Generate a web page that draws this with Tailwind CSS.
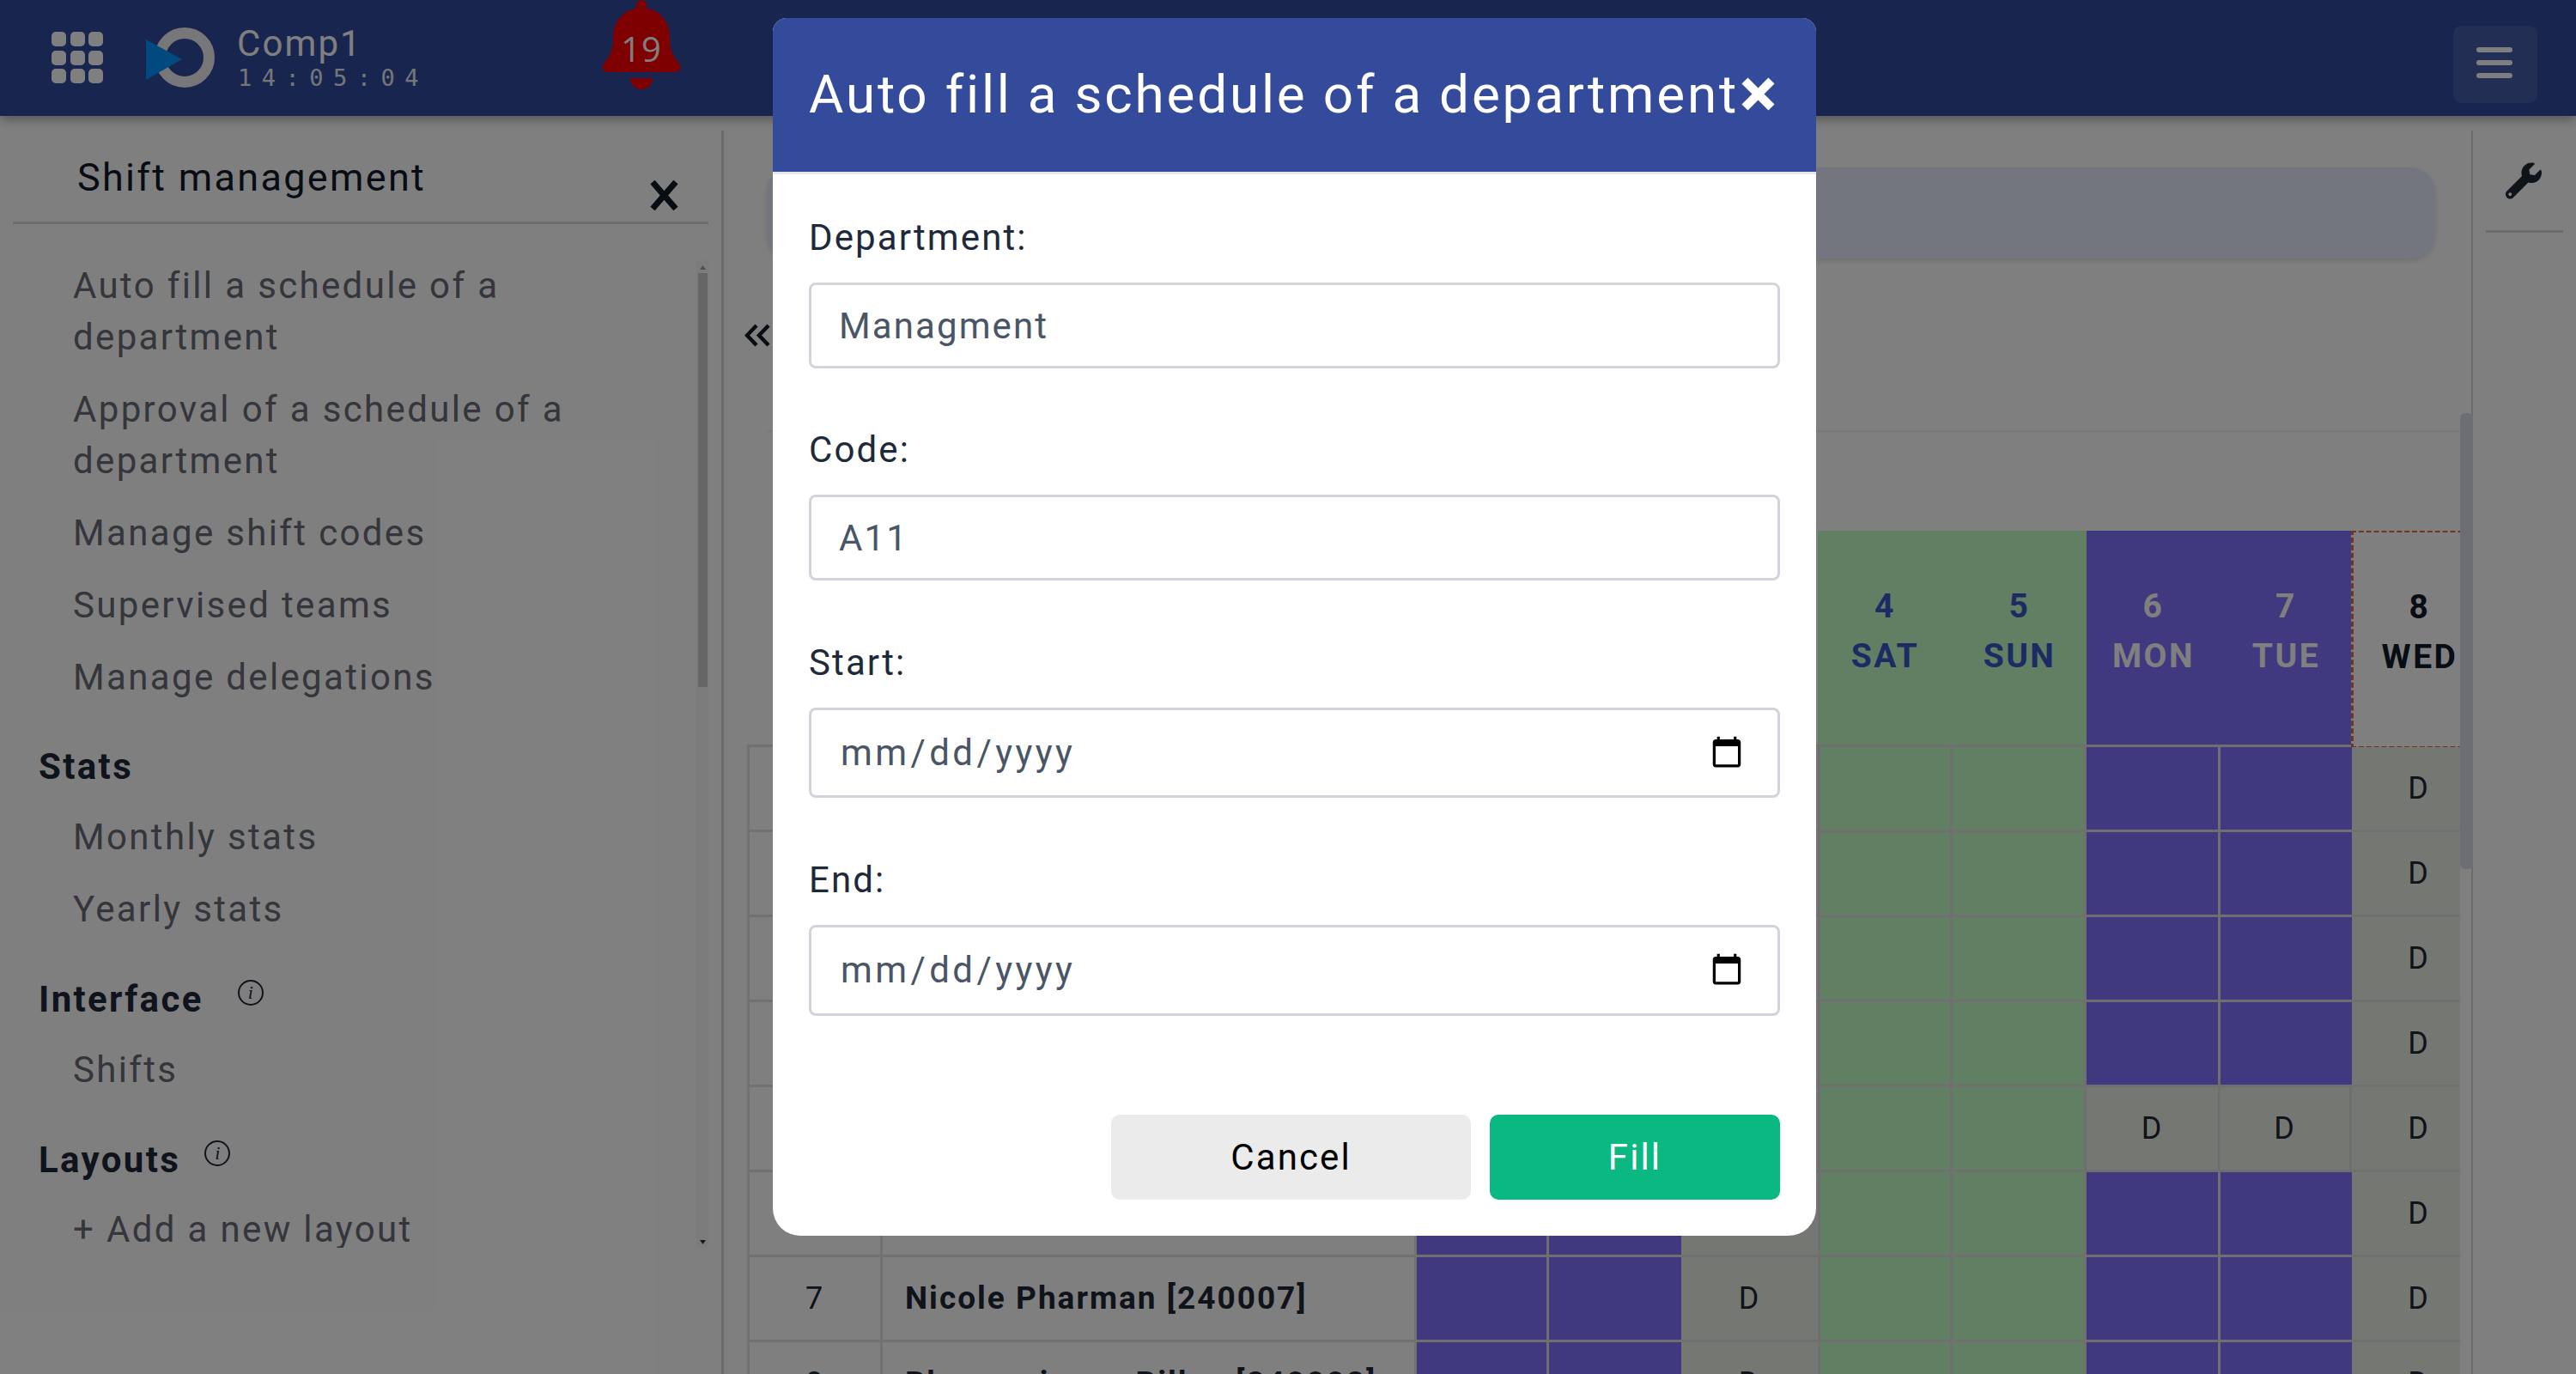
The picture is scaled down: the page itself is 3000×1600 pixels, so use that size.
<!DOCTYPE html>
<html lang="en">
<head>
<meta charset="utf-8">
<title>Auto fill a schedule of a department</title>
<script src="https://cdn.jsdelivr.net/npm/@tailwindcss/browser@4"></script>
</head>
<body class="font-['Roboto',sans-serif] tracking-[2.1px] text-[42px] leading-[60px] bg-white">
<div class="relative w-[3000px] h-[1600px] overflow-hidden flex flex-col">
  <header class="relative z-10 h-[135px] shrink-0 bg-[#304a9e] shadow-[0_4px_12px_rgba(0,0,0,0.35)] flex items-start text-white">
    <div class="ml-[60px] mt-[37px] w-[60px] h-[60px] grid grid-cols-3 gap-[4.5px]">
      <span class="bg-white rounded-[5px]"></span><span class="bg-white rounded-[5px]"></span><span class="bg-white rounded-[5px]"></span>
      <span class="bg-white rounded-[5px]"></span><span class="bg-white rounded-[5px]"></span><span class="bg-white rounded-[5px]"></span>
      <span class="bg-white rounded-[5px]"></span><span class="bg-white rounded-[5px]"></span><span class="bg-white rounded-[5px]"></span>
    </div>
    <svg class="ml-[50px] mt-[30px]" width="82" height="74" viewBox="0 0 82 74"><circle cx="45" cy="37" r="28.5" fill="none" stroke="#eeeef2" stroke-width="13"/><path d="M0 16 L42 39 L0 63 Z" fill="#0095ff"/></svg>
    <div class="ml-[24px] mt-[23px] flex flex-col">
      <span class="leading-[56px]">Comp1</span>
      <span class="font-['DejaVu_Sans_Mono',monospace] text-[27px] leading-[30px] tracking-[11.5px] -mt-[3px] ml-[1px] font-extralight text-white/90">14:05:04</span>
    </div>
    <div class="relative ml-[202px] w-[92px] h-[104px]">
      <svg width="92" height="104" viewBox="0 0 92 104"><rect x="40" y="0" width="12" height="14" rx="6" fill="#ff0000"/><path d="M46 9 C27 9 13 24 13 43 V48 C13 60 7 68 2 74 C-1 78 1 84 7 84 H85 C91 84 93 78 90 74 C85 68 79 60 79 48 V43 C79 24 65 9 46 9 Z" fill="#ff0000"/><path d="M33 91 H59 C59 99 53 104 46 104 C39 104 33 99 33 91 Z" fill="#ff0000"/></svg>
      <span class="absolute inset-x-0 top-[27px] text-center font-['Open_Sans',sans-serif] text-[40px] leading-[60px] tracking-[1px]">19</span>
    </div>
    <div class="ml-auto mr-[45px] mt-[30px] w-[98px] h-[90px] rounded-[10px] bg-white/10 flex flex-col gap-[9px] pt-[25px] pl-[27px]">
      <span class="w-[42px] h-[6px] rounded-full bg-white"></span>
      <span class="w-[42px] h-[6px] rounded-full bg-white"></span>
      <span class="w-[42px] h-[6px] rounded-full bg-white"></span>
    </div>
  </header>

  <div class="flex flex-1 min-h-0">
    <aside class="w-[843px] shrink-0 pt-[17px]">
      <div class="h-full border-r-[3px] border-[#d4d6d8]">
        <div class="relative ml-[15px] mr-[15px] h-[109px] border-b-[3px] border-[#d9d9d9]">
          <h2 class="pl-[75px] pt-[25px] text-[45px] leading-[60px] tracking-[2.3px] text-gray-900">Shift management</h2>
          <svg class="absolute left-[741px] top-[58px]" width="35" height="35" viewBox="0 0 35 35"><path d="M4 2 L31 33 M31 2 L4 33" stroke="#111827" stroke-width="7"/></svg>
        </div>
        <div class="relative ml-[15px] mr-[15px] mt-[42px] h-[1150px] overflow-hidden">
          <div class="absolute right-0 top-0 bottom-0 w-[14px] bg-[#f8f8f8]">
            <div class="absolute left-[2px] right-[1px] top-[15px] h-[482px] bg-[#cdcdcd]"></div>
            <svg class="absolute left-[4px] top-[6px]" width="7" height="5" viewBox="0 0 7 5"><path d="M3.5 0 L7 5 H0 Z" fill="#a0a0a0"/></svg>
            <svg class="absolute left-[4px] bottom-[4px]" width="7" height="5" viewBox="0 0 7 5"><path d="M0 0 H7 L3.5 5 Z" fill="#303030"/></svg>
          </div>
          <nav class="pl-[30px] text-[#686c78] tracking-[2.35px] flex flex-col">
            <ul class="flex flex-col gap-[24px] pl-[40px] w-[720px]">
              <li>Auto fill a schedule of a department</li>
              <li>Approval of a schedule of a department</li>
              <li>Manage shift codes</li>
              <li>Supervised teams</li>
              <li>Manage delegations</li>
            </ul>
            <h3 class="mt-[44px] font-bold text-gray-800">Stats</h3>
            <ul class="mt-[22px] flex flex-col gap-[24px] pl-[40px]">
              <li>Monthly stats</li>
              <li>Yearly stats</li>
            </ul>
            <h3 class="mt-[45px] font-bold text-gray-800 flex items-start">Interface
              <span class="ml-[40px] w-[30px] h-[30px] mt-[7px] rounded-full border-2 border-gray-800 flex items-center justify-center font-['Liberation_Serif',serif] italic font-normal text-[22px] leading-none tracking-normal">i</span>
            </h3>
            <ul class="mt-[22px] pl-[40px]"><li>Shifts</li></ul>
            <h3 class="mt-[45px] font-bold text-gray-800 flex items-start">Layouts
              <span class="ml-[28px] w-[30px] h-[30px] mt-[7px] rounded-full border-2 border-gray-800 flex items-center justify-center font-['Liberation_Serif',serif] italic font-normal text-[22px] leading-none tracking-normal">i</span>
            </h3>
            <ul class="mt-[21px] pl-[40px]"><li>+ Add a new layout</li></ul>
          </nav>
        </div>
      </div>
    </aside>

    <main class="relative flex-1 min-w-0">
      <svg class="absolute left-[24px] top-[242px]" width="30" height="27" viewBox="0 0 30 27"><path d="M14 2 L3 13.5 L14 25 M28 2 L17 13.5 L28 25" fill="none" stroke="#111827" stroke-width="4.5"/></svg>
      <div class="ml-[50px] mr-[42px] mt-[60px] h-[106px] rounded-[28px] bg-[#e6edff] shadow-[0_3px_6px_rgba(0,0,0,0.12)]"></div>
      <div class="ml-[50px] mr-[13px] mt-[200px] h-[2px] bg-[#f3f3f3]"></div>
      <div class="relative ml-[27px] mt-[115px] w-[1995px] overflow-hidden grid grid-cols-[158px_622px_154px_154px_159px_157px_156px_156px_153px_156px] grid-rows-[252px_repeat(8,99px)] text-[#1f2937] text-[36px] tracking-[2px]">
        <div class="col-span-5 border-b-[3px] border-[#e2e2e2]"></div>
        <div class="bg-[#c2fec6] border-b-[3px] border-[#dedede] font-bold text-[39px] tracking-[2.5px] text-[#3a55c8] text-center pt-[59px] leading-[58px]">4<br>SAT</div>
        <div class="bg-[#c2fec6] border-b-[3px] border-[#dedede] font-bold text-[39px] tracking-[2.5px] text-[#3a55c8] text-center pt-[59px] leading-[58px]">5<br>SUN</div>
        <div class="bg-[#8072fe] border-b-[3px] border-[#dedede] font-bold text-[39px] tracking-[2.5px] text-white text-center pt-[59px] leading-[58px]">6<br>MON</div>
        <div class="bg-[#8072fe] border-b-[3px] border-[#dedede] font-bold text-[39px] tracking-[2.5px] text-white text-center pt-[59px] leading-[58px]">7<br>TUE</div>
        <div class="h-[255px] bg-white font-bold text-[39px] tracking-[2.5px] text-gray-900 text-center pt-[58px] leading-[58px] border-t-[3px] border-l-[3px] border-b-[3px] border-dashed border-[#e06a40] -mt-[1px] -ml-[1px]">8<br>WED</div>

        <div class="border-[#e2e2e2] border-b-[3px] border-r-[3px] border-l-[3px] flex items-center justify-center">1</div><div class="border-[#e2e2e2] border-b-[3px] border-r-[3px]"></div><div class="bg-[#ebeee4] border-b-[3px] border-r-[3px] border-[#dcdedc]"></div><div class="bg-[#ebeee4] border-b-[3px] border-r-[3px] border-[#dcdedc]"></div><div class="bg-[#ebeee4] border-b-[3px] border-[#dcdedc]"></div>
        <div class="bg-[#c2fec6] border-b-[3px] border-r-[3px] border-l-[3px] border-[#dedede]"></div><div class="bg-[#c2fec6] border-b-[3px] border-r-[3px] border-[#dedede]"></div><div class="bg-[#8072fe] border-b-[3px] border-r-[3px] border-[#dedede]"></div><div class="bg-[#8072fe] border-b-[3px] border-[#dedede]"></div><div class="bg-[#ebeee4] border-b-[3px] border-[#e0e2dc] flex items-center justify-center">D</div>

        <div class="border-[#e2e2e2] border-b-[3px] border-r-[3px] border-l-[3px] flex items-center justify-center">2</div><div class="border-[#e2e2e2] border-b-[3px] border-r-[3px]"></div><div class="bg-[#ebeee4] border-b-[3px] border-r-[3px] border-[#dcdedc]"></div><div class="bg-[#ebeee4] border-b-[3px] border-r-[3px] border-[#dcdedc]"></div><div class="bg-[#ebeee4] border-b-[3px] border-[#dcdedc]"></div>
        <div class="bg-[#c2fec6] border-b-[3px] border-r-[3px] border-l-[3px] border-[#dedede]"></div><div class="bg-[#c2fec6] border-b-[3px] border-r-[3px] border-[#dedede]"></div><div class="bg-[#8072fe] border-b-[3px] border-r-[3px] border-[#dedede]"></div><div class="bg-[#8072fe] border-b-[3px] border-[#dedede]"></div><div class="bg-[#ebeee4] border-b-[3px] border-[#e0e2dc] flex items-center justify-center">D</div>

        <div class="border-[#e2e2e2] border-b-[3px] border-r-[3px] border-l-[3px] flex items-center justify-center">3</div><div class="border-[#e2e2e2] border-b-[3px] border-r-[3px]"></div><div class="bg-[#ebeee4] border-b-[3px] border-r-[3px] border-[#dcdedc]"></div><div class="bg-[#ebeee4] border-b-[3px] border-r-[3px] border-[#dcdedc]"></div><div class="bg-[#ebeee4] border-b-[3px] border-[#dcdedc]"></div>
        <div class="bg-[#c2fec6] border-b-[3px] border-r-[3px] border-l-[3px] border-[#dedede]"></div><div class="bg-[#c2fec6] border-b-[3px] border-r-[3px] border-[#dedede]"></div><div class="bg-[#8072fe] border-b-[3px] border-r-[3px] border-[#dedede]"></div><div class="bg-[#8072fe] border-b-[3px] border-[#dedede]"></div><div class="bg-[#ebeee4] border-b-[3px] border-[#e0e2dc] flex items-center justify-center">D</div>

        <div class="border-[#e2e2e2] border-b-[3px] border-r-[3px] border-l-[3px] flex items-center justify-center">4</div><div class="border-[#e2e2e2] border-b-[3px] border-r-[3px]"></div><div class="bg-[#ebeee4] border-b-[3px] border-r-[3px] border-[#dcdedc]"></div><div class="bg-[#ebeee4] border-b-[3px] border-r-[3px] border-[#dcdedc]"></div><div class="bg-[#ebeee4] border-b-[3px] border-[#dcdedc]"></div>
        <div class="bg-[#c2fec6] border-b-[3px] border-r-[3px] border-l-[3px] border-[#dedede]"></div><div class="bg-[#c2fec6] border-b-[3px] border-r-[3px] border-[#dedede]"></div><div class="bg-[#8072fe] border-b-[3px] border-r-[3px] border-[#dedede]"></div><div class="bg-[#8072fe] border-b-[3px] border-[#dedede]"></div><div class="bg-[#ebeee4] border-b-[3px] border-[#e0e2dc] flex items-center justify-center">D</div>

        <div class="border-[#e2e2e2] border-b-[3px] border-r-[3px] border-l-[3px] flex items-center justify-center">5</div><div class="border-[#e2e2e2] border-b-[3px] border-r-[3px]"></div><div class="bg-[#ebeee4] border-b-[3px] border-r-[3px] border-[#dcdedc]"></div><div class="bg-[#ebeee4] border-b-[3px] border-r-[3px] border-[#dcdedc]"></div><div class="bg-[#ebeee4] border-b-[3px] border-[#dcdedc]"></div>
        <div class="bg-[#c2fec6] border-b-[3px] border-r-[3px] border-l-[3px] border-[#dedede]"></div><div class="bg-[#c2fec6] border-b-[3px] border-r-[3px] border-[#dedede]"></div><div class="bg-[#ebeee4] border-b-[3px] border-r-[3px] border-[#dcdedc] flex items-center justify-center">D</div><div class="bg-[#ebeee4] border-b-[3px] border-r-[3px] border-[#dcdedc] flex items-center justify-center">D</div><div class="bg-[#ebeee4] border-b-[3px] border-[#e0e2dc] flex items-center justify-center">D</div>

        <div class="border-[#e2e2e2] border-b-[3px] border-r-[3px] border-l-[3px] flex items-center justify-center">6</div><div class="border-[#e2e2e2] border-b-[3px] border-r-[3px]"></div><div class="bg-[#8072fe] border-b-[3px] border-r-[3px] border-[#dedede]"></div><div class="bg-[#8072fe] border-b-[3px] border-[#dedede]"></div><div class="bg-[#ebeee4] border-b-[3px] border-[#dcdedc]"></div>
        <div class="bg-[#c2fec6] border-b-[3px] border-r-[3px] border-l-[3px] border-[#dedede]"></div><div class="bg-[#c2fec6] border-b-[3px] border-r-[3px] border-[#dedede]"></div><div class="bg-[#8072fe] border-b-[3px] border-r-[3px] border-[#dedede]"></div><div class="bg-[#8072fe] border-b-[3px] border-[#dedede]"></div><div class="bg-[#ebeee4] border-b-[3px] border-[#e0e2dc] flex items-center justify-center">D</div>

        <div class="border-[#e2e2e2] border-b-[3px] border-r-[3px] border-l-[3px] flex items-center justify-center">7</div><div class="border-[#e2e2e2] border-b-[3px] border-r-[3px] flex items-center pl-[26px] font-bold text-[37px]">Nicole Pharman [240007]</div><div class="bg-[#8072fe] border-b-[3px] border-r-[3px] border-[#dedede]"></div><div class="bg-[#8072fe] border-b-[3px] border-[#dedede]"></div><div class="bg-[#ebeee4] border-b-[3px] border-[#dcdedc] flex items-center justify-center">D</div>
        <div class="bg-[#c2fec6] border-b-[3px] border-r-[3px] border-l-[3px] border-[#dedede]"></div><div class="bg-[#c2fec6] border-b-[3px] border-r-[3px] border-[#dedede]"></div><div class="bg-[#8072fe] border-b-[3px] border-r-[3px] border-[#dedede]"></div><div class="bg-[#8072fe] border-b-[3px] border-[#dedede]"></div><div class="bg-[#ebeee4] border-b-[3px] border-[#e0e2dc] flex items-center justify-center">D</div>

        <div class="border-[#e2e2e2] border-b-[3px] border-r-[3px] border-l-[3px] flex items-center justify-center">8</div><div class="border-[#e2e2e2] border-b-[3px] border-r-[3px] flex items-center pl-[26px] font-bold text-[37px]">Bhavanajuana Billan [240008]</div><div class="bg-[#8072fe] border-b-[3px] border-r-[3px] border-[#dedede]"></div><div class="bg-[#8072fe] border-b-[3px] border-[#dedede]"></div><div class="bg-[#ebeee4] border-b-[3px] border-[#dcdedc] flex items-center justify-center">D</div>
        <div class="bg-[#c2fec6] border-b-[3px] border-r-[3px] border-l-[3px] border-[#dedede]"></div><div class="bg-[#c2fec6] border-b-[3px] border-r-[3px] border-[#dedede]"></div><div class="bg-[#8072fe] border-b-[3px] border-r-[3px] border-[#dedede]"></div><div class="bg-[#8072fe] border-b-[3px] border-[#dedede]"></div><div class="bg-[#ebeee4] border-b-[3px] border-[#e0e2dc] flex items-center justify-center">D</div>
      </div>
      <div class="absolute -right-[2px] top-[346px] w-[15px] h-[531px] rounded-[6px] bg-[#d8dde8]"></div>
    </main>

    <aside class="w-[122px] shrink-0 pt-[17px]">
      <div class="h-full border-l-[2px] border-[#d4d6d8] pt-[37px] pl-[15px]">
        <svg class="ml-[23px]" width="42" height="43" viewBox="0 0 512 512"><path fill="#1f2937" d="M507.73 109.1c-2.24-9.03-13.54-12.09-20.12-5.51l-74.36 74.36-67.88-11.31-11.31-67.88 74.36-74.36c6.62-6.62 3.43-17.9-5.66-20.16-47.38-11.74-99.55.91-136.58 37.93-39.64 39.64-50.55 97.1-34.05 147.2L18.74 402.76c-24.99 24.99-24.99 65.51 0 90.5 24.99 24.99 65.51 24.99 90.5 0l213.21-213.21c50.12 16.71 107.47 5.68 147.37-34.22 37.07-37.07 49.7-89.32 37.91-136.73zM64 472c-13.25 0-24-10.75-24-24 0-13.26 10.75-24 24-24s24 10.74 24 24c0 13.25-10.75 24-24 24z"/></svg>
        <div class="mt-[36px] w-[90px] h-[3px] bg-[#d9d9d9]"></div>
      </div>
    </aside>
  </div>

  <div class="absolute inset-0 z-20 bg-black/50"></div>

  <div class="absolute z-30 left-[900px] top-[21px] w-[1215px] h-[1418px] bg-white rounded-t-[16px] rounded-b-[32px] overflow-hidden flex flex-col">
    <div class="h-[182px] shrink-0 bg-[#344a9a] border-b-[3px] border-[#e5e7eb] flex items-center px-[42px]">
      <h1 class="text-[62px] leading-[90px] tracking-[2.8px] -mt-[2px] text-white whitespace-nowrap">Auto fill a schedule of a department</h1>
      <svg class="ml-[3px] -mt-[2px] shrink-0" width="39" height="39" viewBox="0 0 39 39"><path d="M4 4 L35 35 M35 4 L4 35" stroke="#fff" stroke-width="10"/></svg>
    </div>
    <form class="flex flex-col px-[42px] pt-[44px] text-gray-800">
      <label class="block h-[60px] mb-[22px]">Department:</label>
      <input type="text" value="Managment" class="h-[100px] w-full rounded-[8px] border-[3px] border-[#d1d5db] px-[32px] text-gray-600 mb-[65px]">
      <label class="block h-[60px] mb-[22px]">Code:</label>
      <input type="text" value="A11" class="h-[100px] w-full rounded-[8px] border-[3px] border-[#d1d5db] px-[32px] text-gray-600 mb-[66px]">
      <label class="block h-[60px] mb-[22px]">Start:</label>
      <input type="date" class="h-[105px] w-full rounded-[8px] border-[3px] border-[#d1d5db] pl-[33px] pr-[36px] tracking-[3.4px] text-gray-600 mb-[66px]">
      <label class="block h-[60px] mb-[22px]">End:</label>
      <input type="date" class="h-[106px] w-full rounded-[8px] border-[3px] border-[#d1d5db] pl-[33px] pr-[36px] tracking-[3.4px] text-gray-600">
      <div class="mt-[115px] flex justify-end gap-[22px]">
        <button type="button" class="w-[419px] h-[99px] rounded-[10px] bg-[#ebebeb] text-black">Cancel</button>
        <button type="button" class="w-[338px] h-[99px] rounded-[10px] bg-[#0ab981] text-white">Fill</button>
      </div>
    </form>
  </div>
</div>
</body>
</html>
